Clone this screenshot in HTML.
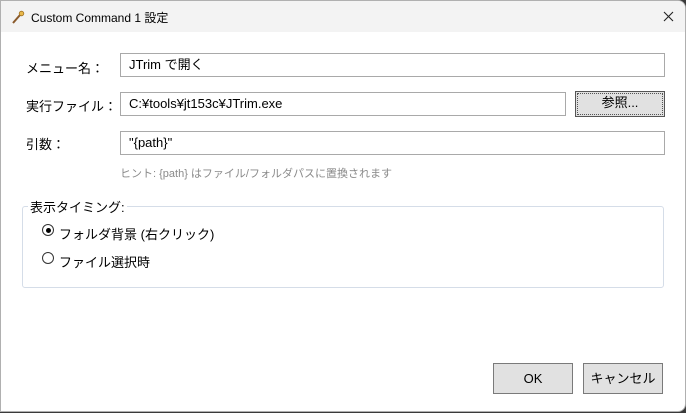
<!DOCTYPE html>
<html><head><meta charset="utf-8"><style>
*{margin:0;padding:0;box-sizing:border-box}
body{width:686px;height:413px;background:#3a3a3a;position:relative;overflow:hidden;font-family:"Liberation Sans","Noto Sans CJK JP",sans-serif;font-size:13px;color:#000}
.win{position:absolute;left:0;top:0;width:686px;height:412px;background:#fff;border:1px solid #b0b0b0;border-radius:0 8px 8px 0;overflow:hidden}
.title{position:absolute;left:0;top:0;width:100%;height:31px;background:#f3f3f3}
.abs{position:absolute;white-space:nowrap}
.inp{position:absolute;border:1px solid #a9a9a9;background:#fff;height:24px;padding-left:8px;line-height:22px;font-size:13px}
.btn{position:absolute;background:#e1e1e1;border:1px solid #7a7a7a;text-align:center;font-size:13px}
.radio{position:absolute;width:12px;height:12px;border:1px solid #333;border-radius:50%;background:#fff}
</style></head><body>
<div class="win">
<div class="title">
<svg class="abs" style="left:10px;top:9px" width="14" height="14" viewBox="0 0 14 14"><line x1="2" y1="13" x2="9" y2="5" stroke="#8a5a2b" stroke-width="2"/><circle cx="10.5" cy="3.5" r="2.3" fill="#e8b84a" stroke="#a07020" stroke-width=".8"/></svg>
<div class="abs" style="left:30px;top:8px;font-size:12px">Custom Command 1 設定</div>
<svg class="abs" style="left:662px;top:10px" width="11" height="11"><path d="M1 1L10 10M10 1L1 10" stroke="#222" stroke-width="1.1"/></svg>
</div>
<div class="abs" style="left:25px;top:57px">メニュー名：</div>
<div class="inp" style="left:119px;top:52px;width:545px">JTrim で開く</div>
<div class="abs" style="left:25px;top:95px">実行ファイル：</div>
<div class="inp" style="left:119px;top:91px;width:446px">C:¥tools¥jt153c¥JTrim.exe</div>
<div class="btn" style="left:574px;top:90px;width:90px;height:26px;border-color:#555;line-height:22px"><div style="position:absolute;inset:1px;border:1px dotted #555"></div>参照...</div>
<div class="abs" style="left:25px;top:133px">引数：</div>
<div class="inp" style="left:119px;top:130px;width:545px">"{path}"</div>
<div class="abs" style="left:119px;top:164px;font-size:11px;color:#8a8a8a">ヒント: {path} はファイル/フォルダパスに置換されます</div>
<div class="abs" style="left:21px;top:205px;width:642px;height:82px;border:1px solid #d5dde8;border-radius:3px"></div>
<div class="abs" style="left:27px;top:196px;background:#fff;padding:0 2px">表示タイミング:</div>
<div class="radio" style="left:41px;top:223px"><div style="position:absolute;left:2.5px;top:2.5px;width:5px;height:5px;border-radius:50%;background:#000"></div></div>
<div class="abs" style="left:58px;top:223px">フォルダ背景 (右クリック)</div>
<div class="radio" style="left:41px;top:251px"></div>
<div class="abs" style="left:58px;top:251px">ファイル選択時</div>
<div class="btn" style="left:492px;top:362px;width:80px;height:31px;line-height:29px">OK</div>
<div class="btn" style="left:582px;top:362px;width:80px;height:31px;line-height:29px">キャンセル</div>
</div>
</body></html>
